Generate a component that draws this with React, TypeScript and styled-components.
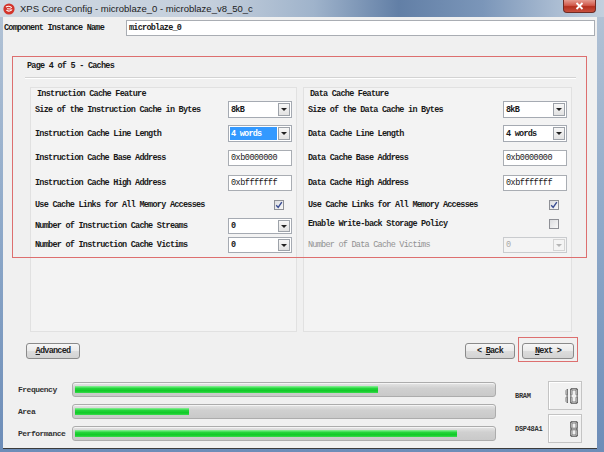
import React from "react";
import styled, { createGlobalStyle } from "styled-components";

const mono = `"Liberation Mono", "DejaVu Sans Mono", monospace`;
const sans = `"Liberation Sans", Arial, sans-serif`;

const Global = createGlobalStyle`
  html, body { margin: 0; padding: 0; width: 604px; height: 452px; overflow: hidden; background: #7f9cc2; }
  #root { width: 604px; height: 452px; }
  * { box-sizing: border-box; }
`;

const Window = styled.div`
  width: 604px;
  height: 452px;
  display: flex;
  flex-direction: column;
  background: linear-gradient(180deg, #b4c4d6 0%, #8ea9c9 50%, #6d8db8 100%);
`;

const TitleBar = styled.div`
  height: 17px;
  flex: none;
  display: flex;
  align-items: center;
  gap: 5px;
  padding-left: 3px;
  background: linear-gradient(90deg, #cfd8e2 0%, #c4cfdc 35%, #9fb3cb 52%, #627fa6 66%, #7b96b9 80%, #aabcd2 92%, #c3d0de 100%);
  font-family: ${sans};
  font-size: 9.5px;
  color: #1c1c1c;
`;

const TitleText = styled.span`
  white-space: nowrap;
`;

const CloseButton = styled.div`
  align-self: flex-start;
  margin-left: auto;
  margin-right: 8px;
  width: 33px;
  height: 13px;
  border: 1px solid #6e2b24;
  border-top: none;
  border-radius: 0 0 4px 4px;
  background: linear-gradient(180deg, #e59a8f 0%, #d15a4c 45%, #b4301f 55%, #c9503e 100%);
  display: flex;
  align-items: center;
  justify-content: center;
`;

const Content = styled.div`
  position: relative;
  flex: 1;
  margin: 0 7px 4px 3px;
  background: #f0f0f0;
  display: flex;
  flex-direction: column;
  font-family: ${mono};
  font-size: 8.5px;
  font-weight: bold;
  letter-spacing: -0.75px;
  color: #1a1a1a;
  box-shadow: 0 1px 0 #3c3c3c;
`;

const InstanceRow = styled.div`
  margin-top: 3px;
  height: 16px;
  display: flex;
  align-items: center;
  padding: 0 2px 0 1px;
`;

const InstanceLabel = styled.div`
  width: 122px;
  white-space: nowrap;
`;

const InstanceField = styled.div`
  flex: 1;
  height: 16px;
  background: #fff;
  border: 1px solid #a9adb3;
  padding-left: 2px;
  display: flex;
  align-items: center;
`;

const PageHeader = styled.div`
  margin: 24px 21px 0 22px;
  line-height: 12px;
  padding-bottom: 5px;
  border-bottom: 1px solid #d3d3d3;
  box-shadow: 0 1px 0 #fff;
  padding-left: 2px;
`;

const Groups = styled.div`
  margin: 9px 25px 0 27px;
  height: 245px;
  display: grid;
  grid-template-columns: 267px 269px;
  gap: 6px;
`;

const Group = styled.div`
  border: 1px solid #e1e1e1;
  background: #f3f3f3;
  padding: 0 4px 0 4px;
  display: flex;
  flex-direction: column;
`;

const GroupTitle = styled.div`
  height: 12px;
  line-height: 12px;
  padding-left: 2px;
`;

const Row = styled.div<{ $h: number; $mt: number }>`
  height: ${(p) => p.$h}px;
  margin-top: ${(p) => p.$mt}px;
  display: grid;
  grid-template-columns: 1fr 64px;
  align-items: center;
`;

const Label = styled.div<{ $disabled?: boolean }>`
  white-space: nowrap;
  color: ${(p) => (p.$disabled ? "#929292" : "#1a1a1a")};
  font-weight: ${(p) => (p.$disabled ? "normal" : "bold")};
`;

const Combo = styled.div<{ $disabled?: boolean }>`
  height: 100%;
  display: flex;
  border: 1px solid ${(p) => (p.$disabled ? "#c9cbce" : "#a5aab2")};
  background: ${(p) => (p.$disabled ? "#f4f4f4" : "#fff")};
  padding: 1px;
`;

const ComboText = styled.div<{ $selected?: boolean; $disabled?: boolean }>`
  flex: 1;
  display: flex;
  align-items: center;
  padding-left: 1px;
  font-weight: ${(p) => (p.$disabled ? "normal" : "bold")};
  background: ${(p) => (p.$selected ? "#3399ff" : "transparent")};
  color: ${(p) => (p.$selected ? "#fff" : p.$disabled ? "#a8a8a8" : "#1a1a1a")};
  margin-right: 1px;
`;

const ComboArrow = styled.div<{ $disabled?: boolean }>`
  width: 12px;
  border: 1px solid ${(p) => (p.$disabled ? "#d4d4d4" : "#9da2a9")};
  background: ${(p) => (p.$disabled ? "#f4f4f4" : "linear-gradient(180deg, #f7f7f7 0%, #e2e2e2 100%)")};
  display: flex;
  align-items: center;
  justify-content: center;
  &::after {
    content: "";
    border-left: 3px solid transparent;
    border-right: 3px solid transparent;
    border-top: 3px solid ${(p) => (p.$disabled ? "#b5b5b5" : "#222")};
  }
`;

const TextField = styled.div`
  height: 100%;
  background: #fff;
  border: 1px solid #a9adb3;
  padding-left: 2px;
  display: flex;
  align-items: center;
  font-weight: normal;
  letter-spacing: -0.5px;
`;

const CheckBox = styled.div`
  justify-self: end;
  margin-right: 8px;
  width: 10px;
  height: 10px;
  border: 1px solid #8e9096;
  background: linear-gradient(135deg, #dcdde0 0%, #f8f8f8 100%);
  display: flex;
  align-items: center;
  justify-content: center;
`;

const ButtonRow = styled.div`
  margin-top: 11px;
  padding: 0 23px;
  height: 16px;
  display: flex;
  gap: 7px;
`;

const Button = styled.div<{ $w: number; $push?: boolean }>`
  width: ${(p) => p.$w}px;
  height: 16px;
  margin-left: ${(p) => (p.$push ? "auto" : "0")};
  border: 1px solid #8a8a8a;
  border-radius: 3px;
  background: linear-gradient(180deg, #f6f6f6 0%, #ebebeb 48%, #dcdcdc 52%, #d3d3d3 100%);
  display: flex;
  align-items: center;
  justify-content: center;
  color: #222;
  white-space: pre;
  u { text-decoration: underline; }
`;

const Stats = styled.div`
  margin-top: 22px;
  padding-left: 15px;
  display: flex;
  align-items: flex-start;
`;

const Bars = styled.div`
  flex: none;
  width: 478px;
  margin-top: 1px;
  display: grid;
  grid-template-columns: 54px 424px;
  grid-auto-rows: 15px;
  row-gap: 7px;
  align-items: center;
`;

const StatLabel = styled.div`
  font-size: 8px;
  letter-spacing: -0.5px;
  color: #333;
  white-space: nowrap;
`;

const Track = styled.div`
  height: 15px;
  border: 1px solid #acacac;
  border-radius: 3px;
  background: linear-gradient(180deg, #e6e6e6 0%, #d0d0d0 40%, #c9c9c9 100%);
  padding: 3px 2px;
  box-shadow: inset 0 1px 0 #f4f4f4;
`;

const Fill = styled.div`
  height: 100%;
  background: linear-gradient(180deg, #8cf19a 0%, #25d53b 35%, #0fc926 70%, #3bdc4e 100%);
`;

const Resources = styled.div`
  flex: none;
  width: 67px;
  margin-left: 19px;
  display: grid;
  grid-template-columns: 33px 34px;
  grid-auto-rows: 29px;
  row-gap: 4px;
  align-items: center;
`;

const ResLabel = styled.div`
  font-size: 7px;
  letter-spacing: -0.3px;
  color: #333;
  white-space: nowrap;
`;

const LcdBox = styled.div`
  width: 34px;
  height: 29px;
  border: 1px solid #c4c4c4;
  box-shadow: inset 1px 1px 0 #fff;
  background: #f1f1f1;
  display: flex;
  align-items: center;
  justify-content: flex-end;
  padding-right: 3px;
`;

const Highlight = styled.div<{ $l: number; $t: number; $w: number; $h: number }>`
  position: absolute;
  left: ${(p) => p.$l}px;
  top: ${(p) => p.$t}px;
  width: ${(p) => p.$w}px;
  height: ${(p) => p.$h}px;
  border: 1px solid #dd6f6f;
  pointer-events: none;
`;

const SEGS: Record<string, string> = {
  a: "1,0.5 7,0.5 6,2 2,2",
  b: "7.5,1 7.5,7.5 6,6.8 6,2.6",
  c: "7.5,8.5 7.5,15 6,13.4 6,9.2",
  d: "1,15.5 7,15.5 6,14 2,14",
  e: "0.5,8.5 0.5,15 2,13.4 2,9.2",
  f: "0.5,1 0.5,7.5 2,6.8 2,2.6",
  g: "1,8 2,7.2 6,7.2 7,8 6,8.8 2,8.8",
};
const DIGITS: Record<string, string> = {
  "0": "abcdef",
  "1": "bc",
  "8": "abcdefg",
};

function SevenSeg({ value }: { value: string }) {
  const chars = value.split("");
  const w = chars.length * 10 - 2;
  return (
    <svg width={w} height={16} viewBox={`0 0 ${w} 16`} style={{ flex: "none" }}>
      {chars.map((ch, i) => (
        <g key={i} transform={`translate(${i * 10},0)`}>
          {DIGITS[ch].split("").map((s) => (
            <polygon key={s} points={SEGS[s]} fill="#e4e4e4" stroke="#4a4a4a" strokeWidth={0.7} />
          ))}
        </g>
      ))}
    </svg>
  );
}

function Check() {
  return (
    <svg width="8" height="8" viewBox="0 0 8 8">
      <path d="M1.2 4.2 L3.2 6.4 L6.8 1.2" fill="none" stroke="#3a4d92" strokeWidth="1.4" />
    </svg>
  );
}

type Ctrl =
  | { kind: "combo"; value: string; selected?: boolean; disabled?: boolean }
  | { kind: "text"; value: string }
  | { kind: "check"; checked: boolean };

type RowDef = { label: string; ctrl: Ctrl; h: number; mt: number; disabled?: boolean };

const leftRows: RowDef[] = [
  { label: "Size of the Instruction Cache in Bytes", ctrl: { kind: "combo", value: "8kB" }, h: 17, mt: 1 },
  { label: "Instruction Cache Line Length", ctrl: { kind: "combo", value: "4 words", selected: true }, h: 17, mt: 7 },
  { label: "Instruction Cache Base Address", ctrl: { kind: "text", value: "0xb0000000" }, h: 16, mt: 8 },
  { label: "Instruction Cache High Address", ctrl: { kind: "text", value: "0xbfffffff" }, h: 16, mt: 9 },
  { label: "Use Cache Links for All Memory Accesses", ctrl: { kind: "check", checked: true }, h: 17, mt: 5 },
  { label: "Number of Instruction Cache Streams", ctrl: { kind: "combo", value: "0" }, h: 16, mt: 5 },
  { label: "Number of Instruction Cache Victims", ctrl: { kind: "combo", value: "0" }, h: 16, mt: 3 },
];

const rightRows: RowDef[] = [
  { label: "Size of the Data Cache in Bytes", ctrl: { kind: "combo", value: "8kB" }, h: 17, mt: 1 },
  { label: "Data Cache Line Length", ctrl: { kind: "combo", value: "4 words" }, h: 17, mt: 7 },
  { label: "Data Cache Base Address", ctrl: { kind: "text", value: "0xb0000000" }, h: 16, mt: 8 },
  { label: "Data Cache High Address", ctrl: { kind: "text", value: "0xbfffffff" }, h: 16, mt: 9 },
  { label: "Use Cache Links for All Memory Accesses", ctrl: { kind: "check", checked: true }, h: 17, mt: 5 },
  { label: "Enable Write-back Storage Policy", ctrl: { kind: "check", checked: false }, h: 12, mt: 5 },
  { label: "Number of Data Cache Victims", ctrl: { kind: "combo", value: "0", disabled: true }, h: 16, mt: 7, disabled: true },
];

function Control({ ctrl }: { ctrl: Ctrl }) {
  if (ctrl.kind === "combo") {
    return (
      <Combo $disabled={ctrl.disabled}>
        <ComboText $selected={ctrl.selected} $disabled={ctrl.disabled}>
          {ctrl.value}
        </ComboText>
        <ComboArrow $disabled={ctrl.disabled} />
      </Combo>
    );
  }
  if (ctrl.kind === "text") return <TextField>{ctrl.value}</TextField>;
  return <CheckBox>{ctrl.checked && <Check />}</CheckBox>;
}

function CacheGroup({ title, rows }: { title: string; rows: RowDef[] }) {
  return (
    <Group>
      <GroupTitle>{title}</GroupTitle>
      {rows.map((r) => (
        <Row key={r.label} $h={r.h} $mt={r.mt}>
          <Label $disabled={r.disabled}>{r.label}</Label>
          <Control ctrl={r.ctrl} />
        </Row>
      ))}
    </Group>
  );
}

const stats = [
  { label: "Frequency", value: 72.6 },
  { label: "Area", value: 27.2 },
  { label: "Performance", value: 91.5 },
];

export default function App() {
  return (
    <>
      <Global />
      <Window>
        <TitleBar>
          <svg width="12" height="12" viewBox="0 0 12 12">
            <circle cx="6" cy="6" r="5.6" fill="#d3342b" />
            <path d="M3 4.2 C4.5 2.6 8 3 8.6 5 M3.4 7.2 C5 8.8 8.4 8.2 9 6.4 M4 5.8 L8 6" fill="none" stroke="#fff" strokeWidth="1.1" />
          </svg>
          <TitleText>XPS Core Config - microblaze_0 - microblaze_v8_50_c</TitleText>
          <CloseButton>
            <svg width="9" height="8" viewBox="0 0 9 8">
              <path d="M1.5 1 L7.5 7 M7.5 1 L1.5 7" stroke="#fff" strokeWidth="1.8" />
            </svg>
          </CloseButton>
        </TitleBar>
        <Content>
          <InstanceRow>
            <InstanceLabel>Component Instance Name</InstanceLabel>
            <InstanceField>microblaze_0</InstanceField>
          </InstanceRow>
          <PageHeader>Page 4 of 5 - Caches</PageHeader>
          <Groups>
            <CacheGroup title="Instruction Cache Feature" rows={leftRows} />
            <CacheGroup title="Data Cache Feature" rows={rightRows} />
          </Groups>
          <ButtonRow>
            <Button $w={54}>
              <u>A</u>dvanced
            </Button>
            <Button $w={50} $push>
              {"< "}
              <u>B</u>ack
            </Button>
            <Button $w={52}>
              <u>N</u>
              {"ext >"}
            </Button>
          </ButtonRow>
          <Stats>
            <Bars>
              {stats.map((s) => (
                <React.Fragment key={s.label}>
                  <StatLabel>{s.label}</StatLabel>
                  <Track>
                    <Fill style={{ width: `${s.value}%` }} />
                  </Track>
                </React.Fragment>
              ))}
            </Bars>
            <Resources>
              <ResLabel>BRAM</ResLabel>
              <LcdBox>
                <SevenSeg value="10" />
              </LcdBox>
              <ResLabel>DSP48A1</ResLabel>
              <LcdBox>
                <SevenSeg value="8" />
              </LcdBox>
            </Resources>
          </Stats>
          <Highlight $l={9} $t={39} $w={575} $h={202} />
          <Highlight $l={515} $t={320} $w={60} $h={25} />
        </Content>
      </Window>
    </>
  );
}
